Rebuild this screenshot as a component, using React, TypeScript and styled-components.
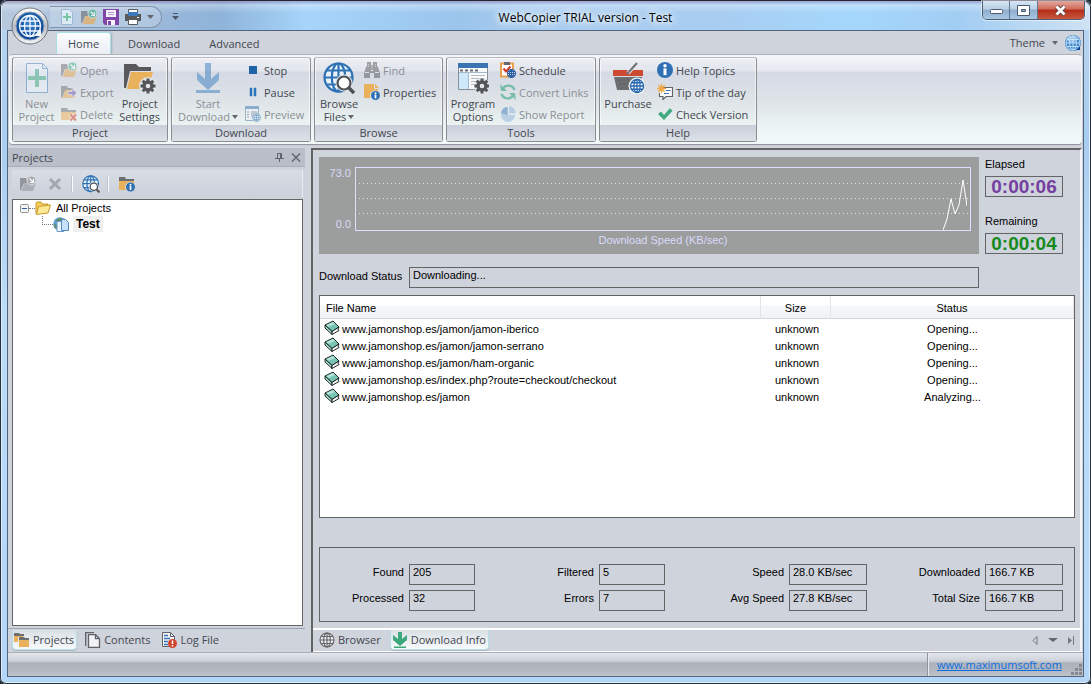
import React from "react";
import styled, { createGlobalStyle } from "styled-components";

const ui = `"Open Sans", "Noto Sans", sans-serif`;
const sys = `"Liberation Sans", Arial, sans-serif`;
const c = {
  face: "#cfd3dc",
  line: "#646464",
  ink: "#43474f",
  dim: "#8b8e95",
  blue: "#2f72b4",
  orange: "#eab15c",
  gray: "#58595b",
  green: "#3fa77c",
};

const Global = createGlobalStyle`
  * { box-sizing: border-box; }
  body { margin: 0; background: #1c2430; overflow: hidden; }
  button { font: inherit; color: inherit; background: none; border: 0; padding: 0; }
  svg { display: block; flex: none; }
`;

/* ---------- window frame ---------- */
const Window = styled.div`
  display: flex;
  flex-direction: column;
  height: 100vh;
  min-height: 560px;
  padding: 0 7px 7px;
  border-radius: 7px 7px 6px 6px;
  background: linear-gradient(180deg, #b9d5ee 0, #a9cdf0 20%, #bcdcf7 45%, #b3d6f8 100%);
  box-shadow: inset 0 0 0 1px #27313f, inset 0 0 0 2px #dcecfa;
  font: 11px/13px ${ui};
  color: ${c.ink};
`;
const TitleBar = styled.header`
  position: relative;
  display: flex;
  flex: none;
  height: 30px;
  margin: 0 -5px;
  background: linear-gradient(180deg, rgba(140, 110, 160, 0.35) 1px, rgba(255, 255, 255, 0.3) 4px, rgba(255, 255, 255, 0) 12px),
    linear-gradient(90deg, #b6c9dd 0, #a3bdda 10%, #8fb3d9 20%, #a6d4fa 28%, #9cc5ec 42%, #a9cdf0 50%, #a8cdf1 66%, #a5d7fc 78%, #a2cdf3 88%, #cfe2f3 100%);
  border-radius: 6px 6px 0 0;
  border-top: 1px solid #2b2334;
`;
const Title = styled.h1`
  flex: 1;
  margin: 0;
  padding: 0 0 0 187px;
  text-align: center;
  font: 12px/33px ${ui};
  color: #000;
  text-shadow: 0 0 6px #fff, 0 0 9px #fff, 0 0 12px #fff;
`;
const QuickBar = styled.div`
  position: absolute;
  left: 48px;
  top: 5px;
  display: flex;
  align-items: center;
  gap: 6px;
  height: 22px;
  width: 112px;
  padding-left: 9px;
  border: 1px solid #8195ae;
  border-left: 0;
  border-radius: 0 12px 12px 0;
  background: rgba(255, 255, 255, 0.2);
`;
const More = styled.button`
  position: absolute;
  left: 170px;
  top: 12px;
`;
const Orb = styled.button`
  position: absolute;
  left: 9px;
  top: 6px;
  width: 38px;
  height: 38px;
  z-index: 2;
`;
const WinButtons = styled.div`
  display: flex;
  width: 103px;
  height: 19px;
  margin-right: 4px;
  border: 1px solid #4d6078;
  border-top: 0;
  border-radius: 0 0 5px 5px;
  overflow: hidden;
  box-shadow: 0 0 0 1px rgba(255, 255, 255, 0.5);
`;
const WinButton = styled.button<{ $close?: boolean }>`
  flex: ${(p) => (p.$close ? 47 : 27)};
  display: flex;
  align-items: center;
  justify-content: center;
  border-right: ${(p) => (p.$close ? 0 : "1px solid #62778f")};
  background: ${(p) =>
    p.$close
      ? "linear-gradient(#e2a99f 0, #d06a58 45%, #b22c18 50%, #c9573f 100%)"
      : "linear-gradient(#d7e6f5 0, #b9cfe6 45%, #8fadcc 50%, #a9c6e2 100%)"};
`;
const Client = styled.div`
  display: flex;
  flex-direction: column;
  flex: 1;
  min-height: 0;
  border: 1px solid #53657c;
  background: ${c.face};
`;

/* ---------- ribbon ---------- */
const TabRow = styled.nav`
  display: flex;
  flex: none;
  align-items: flex-end;
  height: 23px;
  padding: 0 2px 0 48px;
`;
const Tab = styled.button<{ $on?: boolean }>`
  height: 22px;
  padding: 0 11px;
  margin-right: 5px;
  border: 1px solid transparent;
  border-bottom: 0;
  border-radius: 3px 3px 0 0;
  ${(p) => p.$on && "border-color: #a9dfe4; background: linear-gradient(#fdfdfe, #e9edf4); box-shadow: 1px 0 2px #9fb0bd;"}
`;
const Theme = styled.button`
  display: flex;
  align-items: center;
  gap: 7px;
  height: 23px;
  margin-left: auto;
`;
const Ribbon = styled.section`
  display: flex;
  flex: none;
  gap: 3px;
  height: 90px;
  margin: 0 1px;
  padding: 2px 2px 1px;
  border: 1px solid #f4f6f9;
  border-top-color: #b0b1b6;
  border-radius: 4px;
  background: linear-gradient(#f5f6fa 0, #e6e9f0 16px, #d5dae6 17px, #e0e5e9 50px, #effaf8 80px, #effaf8 100%);
  box-shadow: 0 1px 1px #8c8f97;
`;
const GroupBox = styled.div<{ $w: number }>`
  display: flex;
  flex-direction: column;
  flex: none;
  width: ${(p) => p.$w}px;
  height: 85px;
  border: 1px solid #8a8c90;
  border-top-color: #b7b9bf;
  border-radius: 3px;
  background: linear-gradient(#eceef3 0, #e1e5ec 13px, #d4d9e4 14px, #dfe4e8 44px, #ebf4f2 68px);
  box-shadow: inset 0 0 0 1px rgba(255, 255, 255, 0.6);
`;
const GroupBody = styled.div`
  display: flex;
  flex: 1;
`;
const GroupName = styled.div`
  height: 16px;
  text-align: center;
  line-height: 16px;
  background: linear-gradient(#c9ced9, #dde1e8);
`;
const Big = styled.button<{ $w: number }>`
  display: flex;
  flex-direction: column;
  align-items: center;
  gap: 3px;
  width: ${(p) => p.$w}px;
  padding-top: 4px;
  line-height: 13px;
  white-space: nowrap;
  &:disabled { color: ${c.dim}; }
  &:disabled > svg { opacity: 0.5; }
`;
const Line = styled.span`
  display: flex;
  align-items: center;
  justify-content: center;
  gap: 2px;
  height: 13px;
`;
const Column = styled.div`
  display: flex;
  flex-direction: column;
  padding-top: 1px;
`;
const Small = styled.button`
  display: flex;
  align-items: center;
  gap: 3px;
  height: 22px;
  padding: 0 1px;
  white-space: nowrap;
  &:disabled { color: ${c.dim}; }
  &:disabled > svg { opacity: 0.5; }
`;

/* ---------- docked panes ---------- */
const Work = styled.main`
  display: flex;
  flex: 1;
  min-height: 0;
  gap: 6px;
  margin-top: 4px;
`;
const Dock = styled.aside`
  display: flex;
  flex-direction: column;
  flex: none;
  width: 297px;
`;
const Caption = styled.div`
  display: flex;
  align-items: center;
  gap: 7px;
  height: 19px;
  padding: 0 4px;
  background: #b9bec9;
  border-bottom: 1px solid #a7adba;
  h2 { flex: 1; margin: 0; font: inherit; }
`;
const Tools = styled.div`
  display: flex;
  align-items: center;
  height: 27px;
  margin: 3px 2px 2px 4px;
  padding-left: 2px;
  border-right: 1px solid #e8edf4;
  background: linear-gradient(#d9dde5, #cbd0da);
`;
const ToolButton = styled.button`
  display: flex;
  justify-content: center;
  width: 27px;
  &:disabled { opacity: 0.9; }
`;
const Divider = styled.span`
  width: 1px;
  height: 16px;
  margin: 0 4px;
  background: #fafbfd;
  box-shadow: -1px 0 0 #c0c4cc;
`;
const TreeBox = styled.div`
  flex: 1;
  margin: 0 2px 2px 4px;
  padding: 0 7px;
  border: 1px solid ${c.line};
  background: #fff;
  font: 11px/16px ${sys};
  color: #000;
`;
const TreeRow = styled.div<{ $depth: number }>`
  display: flex;
  align-items: center;
  height: 16px;
  padding-left: ${(p) => p.$depth * 22}px;
`;
const TreeName = styled.span<{ $selected?: boolean }>`
  padding: 0 3px;
  margin-left: 2px;
  ${(p) => p.$selected && `margin-left: 4px; background: #efefef; font-weight: bold; font-size: 12px;`}
`;
const Dots = styled.span<{ $elbow?: boolean }>`
  width: ${(p) => (p.$elbow ? 11 : 6)}px;
  height: ${(p) => (p.$elbow ? 9 : 1)}px;
  border-bottom: 1px dotted #777;
  border-left: ${(p) => (p.$elbow ? "1px dotted #777" : 0)};
  align-self: ${(p) => (p.$elbow ? "flex-start" : "center")};
`;
const BottomTabs = styled.nav`
  display: flex;
  flex: none;
  align-items: flex-start;
  gap: 6px;
  height: 24px;
  padding: 1px 10px 0 4px;
  border-top: 1px solid #9ea3ad;
`;
const BottomTab = styled.button<{ $on?: boolean }>`
  display: flex;
  align-items: center;
  gap: 3px;
  height: 20px;
  padding: 0 2px 0 1px;
  border: 1px solid transparent;
  border-top: 0;
  border-radius: 0 0 4px 4px;
  ${(p) => p.$on && "border-color: #b4dfe6; background: linear-gradient(#d9dfe5, #f8fafb); box-shadow: 0 1px 1px #aeb5bf;"}
`;
const TabNav = styled.span`
  display: flex;
  align-items: center;
  gap: 10px;
  height: 20px;
  margin-left: auto;
`;
const View = styled.section`
  display: flex;
  flex-direction: column;
  flex: 1;
  min-width: 0;
  margin-right: 1px;
  border-left: 2px solid ${c.line};
  border-top: 2px solid ${c.line};
  border-right: 2px solid #f4f6f9;
  ${BottomTabs} {
    padding: 0 5px 0 4px;
    border-top: 2px solid #fff;
    border-bottom: 1px solid #fff;
  }
`;
const Page = styled.div`
  display: flex;
  flex-direction: column;
  flex: 1;
  min-height: 0;
  padding: 7px 5px 6px 6px;
  font: 11px/14px ${sys};
  color: #000;
`;
const Meters = styled.div`
  display: flex;
  gap: 6px;
  flex: none;
`;
const Graph = styled.figure`
  display: grid;
  flex: 1;
  grid-template: 64px 1fr / 32px 1fr;
  gap: 0 4px;
  height: 97px;
  margin: 0;
  padding: 10px 8px 0 0;
  background: #9c9e9d;
  color: #d9d9fb;
`;
const Scale = styled.div`
  display: flex;
  flex-direction: column;
  justify-content: space-between;
  text-align: right;
  line-height: 13px;
`;
const Plot = styled.div`
  display: flex;
  justify-content: flex-end;
  padding-right: 3px;
  border: 1px solid #dedeff;
  background: 
    repeating-linear-gradient(90deg, transparent 0 3px, #e4e4e0 3px 4px) 0 15px / 100% 1px no-repeat,
    repeating-linear-gradient(90deg, transparent 0 3px, #e4e4e0 3px 4px) 0 30px / 100% 1px no-repeat,
    repeating-linear-gradient(90deg, transparent 0 3px, #e4e4e0 3px 4px) 0 45px / 100% 1px no-repeat;
`;
const GraphName = styled.figcaption`
  grid-column: 2;
  text-align: center;
  line-height: 19px;
`;
const Timers = styled.div`
  display: flex;
  flex-direction: column;
  justify-content: space-between;
  width: 90px;
`;
const Timer = styled.div`
  display: flex;
  flex-direction: column;
  gap: 5px;
`;
const Clock = styled.output<{ $color: string }>`
  width: 78px;
  height: 21px;
  border: 1px solid ${c.line};
  text-align: center;
  font: bold 19px/20px ${sys};
  color: ${(p) => p.$color};
`;
const StatusRow = styled.div`
  display: flex;
  flex: none;
  margin: 13px 96px 7px 0;
  label { width: 90px; line-height: 19px; }
`;
const Value = styled.output`
  flex: 1;
  height: 21px;
  padding-left: 3px;
  border: 1px solid ${c.line};
  line-height: 15px;
  white-space: nowrap;
`;
const ListBox = styled.div`
  flex: 1;
  min-height: 0;
  overflow: hidden;
  border: 1px solid ${c.line};
  background: #fff;
`;
const Files = styled.table`
  width: 100%;
  table-layout: fixed;
  border-collapse: separate;
  border-spacing: 0;
  th {
    height: 23px;
    padding: 2px 0 0;
    font-weight: normal;
    background: linear-gradient(#fff 0 9px, #f7f8fa 10px, #f1f2f4 100%);
    border-bottom: 1px solid #d5d5d5;
    border-right: 1px solid #e2e5e9;
  }
  th:first-child { padding-left: 6px; text-align: left; }
  td { height: 17px; padding: 0; text-align: center; }
  td:nth-child(2) { padding-left: 2px; }
  tbody::before { content: ""; display: block; height: 1px; }
`;
const FileName = styled.div`
  display: flex;
  align-items: center;
  gap: 2px;
  height: 17px;
  padding-left: 4px;
  svg { align-self: flex-start; }
`;
const Stats = styled.div`
  display: grid;
  flex: none;
  grid-template-columns: 89px 66px 124fr 66px 124fr 78px 118fr 78px;
  row-gap: 5px;
  margin-top: 29px;
  padding: 16px 11px 10px 0;
  border: 1px solid ${c.line};
  label { padding-right: 5px; text-align: right; line-height: 17px; white-space: nowrap; }
`;
const StatusBar = styled.footer`
  display: flex;
  flex: none;
  justify-content: flex-end;
  height: 24px;
  border-top: 1px solid #a9adb6;
  background: linear-gradient(#e3e6eb 0, #cdd1d9 8px, #adb2bb 10px, #b3b7c0 17px, #c0c3ca 100%);
`;
const LinkCell = styled.div`
  display: flex;
  width: 156px;
  padding-left: 9px;
  border-left: 1px solid #8f949d;
  box-shadow: inset 1px 0 0 #e8eaee;
  a { flex: 1; color: #0a6fe0; line-height: 24px; }
  svg { align-self: flex-end; }
`;

/* ---------- icons ---------- */
const Arrow = ({ w = 7 }: { w?: number }) => (
  <svg width={w} height="4" viewBox="0 0 8 4" preserveAspectRatio="none"><path d="M0 0h8L4 4z" fill="#66686c" /></svg>
);
const Pic = ({ s = 16, children }: { s?: number; children: React.ReactNode }) => (
  <svg width={s} height={s} viewBox={`0 0 ${s} ${s}`}>{children}</svg>
);
const Net = ({ x, y, r, color = c.blue, fill = "#fff", w = 1.3 }: { x: number; y: number; r: number; color?: string; fill?: string; w?: number }) => (
  <g fill="none" stroke={color} strokeWidth={w}>
    <circle cx={x} cy={y} r={r} fill={fill} />
    <ellipse cx={x} cy={y} rx={r * 0.48} ry={r} />
    <path d={`M${x} ${y - r}v${2 * r}M${x - r} ${y}h${2 * r}M${x - r * 0.86} ${y - r * 0.5}h${r * 1.72}M${x - r * 0.86} ${y + r * 0.5}h${r * 1.72}`} />
  </g>
);
const Gear = ({ x, y }: { x: number; y: number }) => (
  <g transform={`translate(${x} ${y})`} stroke="#555659" fill="none">
    <circle r="4" strokeWidth="3.4" />
    <path d="M0-7.5V-5M0 7.5V5M-7.5 0H-5M7.5 0H5M-5.3-5.3l1.8 1.8M5.3 5.3L3.5 3.5M-5.3 5.3l1.8-1.8M5.3-5.3L3.5-3.5" strokeWidth="3" />
  </g>
);
const Info = ({ x, y, r }: { x: number; y: number; r: number }) => (
  <g>
    <circle cx={x} cy={y} r={r} fill="#2f6fb3" />
    <path d={`M${x} ${y - r * 0.2}v${r * 0.85}`} stroke="#fff" strokeWidth={r * 0.38} fill="none" />
    <circle cx={x} cy={y - r * 0.52} r={r * 0.22} fill="#fff" />
  </g>
);
const NewDoc = () => (
  <Pic s={32}>
    <path d="M5.500 1.500h16l5 5v24h-21z" fill="#eaf3fa" stroke="#4a80bd" />
    <path d="M21.500 1.500v5h5" fill="none" stroke="#4a80bd" />
    <path d="M15 8h4v7h7v4h-7v7h-4v-7H8v-4h7z" fill="#44ae85" transform="translate(-1 -1)" />
  </Pic>
);
const SmallDoc = () => (
  <Pic>
    <path d="M2.500.5h8l3 3v12h-11z" fill="#dceaf5" stroke="#9db9d8" />
    <path d="M7 4h2v3h3v2H9v3H7V9H4V7h3z" fill="#7cc6a4" />
  </Pic>
);
const OpenPic = ({ soft, mono }: { soft?: boolean; mono?: boolean }) => (
  <Pic>
    <g opacity={soft ? 0.65 : 1}>
      <path d="M0 2h6l1 2h4v3H4L1 14H0z" fill={mono ? "#8d9095" : "#707174"} />
      <path d="M4.500 7H16l-3 8H1.500z" fill={mono ? "#a9adb2" : "#e8a850"} />
      <circle cx="11.500" cy="4.500" r="4.500" fill={mono ? "#a3a6aa" : "#3eac84"} stroke="#dfe3ea" />
      <path d="M9.500 2.500l4 4M13.500 3v3.500H10" stroke="#fff" strokeWidth="1.200" fill="none" />
    </g>
  </Pic>
);
const ExportPic = () => (
  <Pic>
    <path d="M0 2h6l1 2h5v3H4L1 14H0z" fill="#707174" />
    <path d="M4.500 6H14v8H1.500z" fill="#e8a850" />
    <path d="M7 7.500h4V4.500L16 9l-5 4.500v-3H7z" fill="#7152b5" stroke="#e6e8ee" strokeWidth=".8" />
  </Pic>
);
const DeletePic = () => (
  <Pic>
    <path d="M0 2h6l1 2h8v2H0z" fill="#707174" />
    <path d="M0 6h15v8H0z" fill="#e8a850" />
    <path d="M9.500 8.500l5.500 6M15 8.500l-5.500 6" stroke="#f3f3f3" strokeWidth="4" />
    <path d="M9.500 8.500l5.500 6M15 8.500l-5.500 6" stroke="#d0351f" strokeWidth="2.200" />
  </Pic>
);
const SettingsPic = () => (
  <Pic s={32}>
    <path d="M0 2h12l3 3h12v4H6L2 26H0z" fill="#59595b" />
    <path d="M7 10h22l-5 17H3z" fill={c.orange} />
    <circle cx="24" cy="24" r="9" fill="#dfe5e8" />
    <Gear x={24} y={24} />
  </Pic>
);
const DownPic = () => (
  <Pic s={32}>
    <path d="M13 1h6v16l8-7v8L16 28 5 18v-8l8 7zM4 28h24v3H4z" fill="#3b7fc0" />
  </Pic>
);
const PreviewPic = () => (
  <Pic>
    <path d="M.5.500h13v14H.5z" fill="#edf3fa" stroke="#53779e" />
    <path d="M0 0h14v3H0z" fill="#3973b3" />
    <path d="M2 6h2M2 8.500h2M2 11h2M6 6h6M6 8h4M6 10h2" stroke="#55606c" />
    <Net x={11.500} y={11.500} r={4} w={0.9} />
  </Pic>
);
const BrowsePic = ({ s = 32 }: { s?: number }) => (
  <svg width={s} height={s} viewBox="0 0 32 32">
    <Net x={15.500} y={15.500} r={14} fill="#e9f2fb" w={2.200} />
    <circle cx="21" cy="21" r="8.500" fill="#e6edf2" />
    <path d="M25 25l6 6" stroke="#505154" strokeWidth="3.500" />
    <circle cx="21" cy="21" r="6.500" fill="#fff" stroke="#505154" strokeWidth="2.200" />
  </svg>
);
const FindPic = () => (
  <Pic>
    <path d="M3 0h4v3h2V0h4v4l1 1 2 6v5H10v-5H6v5H0v-5l2-6 1-1z" fill="#55565a" />
    <path d="M7.500 4h1M7.500 6h1M7 8.500h2" stroke="#eee" />
    <path d="M1 10.500h4M11 10.500h4" stroke="#e4e4e4" />
    <path d="M4.500 2v3M11.500 2v3" stroke="#999" />
  </Pic>
);
const PropsPic = () => (
  <Pic>
    <path d="M0 0h10v5h4v9H0z" fill={c.orange} />
    <path d="M11 0l4 4h-4z" fill={c.orange} />
    <circle cx="11" cy="11.500" r="5" fill="#e4eaee" />
    <Info x={11.500} y={11.500} r={4.500} />
  </Pic>
);
const OptionsPic = () => (
  <Pic s={32}>
    <path d="M1.500 1.500h29v26h-29z" fill="#f7f9fb" stroke="#8a8d92" />
    <path d="M1 1h30v5H1z" fill="#3973b3" />
    <path d="M3 8.500h18" stroke="#6b6d70" strokeWidth="2" strokeDasharray="3 2" />
    <path d="M2 11h9v16H2z" fill="#cde8fa" />
    <path d="M11.500 11v16M2 10.500h28" stroke="#a8b8c8" />
    <path d="M14 13.500h14M14 16.500h14M14 19.500h8M14 22.500h5" stroke="#b7babd" />
    <circle cx="25" cy="24" r="8" fill="#e3e8ea" />
    <Gear x={25} y={24} />
  </Pic>
);
const SchedulePic = () => (
  <Pic>
    <path d="M1 1.500h12v13H1z" fill="#fff" stroke="#e7a14b" strokeWidth="2" />
    <path d="M4 0h6v3H4z" fill="#67686b" />
    <path d="M3.500 6.500l2.500 3 4.500-5" fill="none" stroke="#cf3a26" strokeWidth="2" />
    <Net x={11.500} y={11.500} r={4} w={1.100} color="#2459a0" />
  </Pic>
);
const ConvertPic = () => (
  <Pic>
    <g fill="none" stroke="#169b6d" strokeWidth="2.300">
      <path d="M14.500 6A6.500 6.500 0 0 0 3 4.500M1.500 10A6.500 6.500 0 0 0 13 11.500" />
    </g>
    <path d="M0 0l1 7h6zM16 16l-1-7H9z" fill="#169b6d" />
  </Pic>
);
const ReportPic = () => (
  <Pic>
    <path d="M7 2v7h7A7 7 0 1 1 7 2z" transform="translate(1 0)" fill="#8fb3dc" />
    <path d="M9 0a7 7 0 0 1 6.500 7.500H9z" fill="#8fb3dc" />
    <path d="M7.500 1A7 7 0 0 0 1 7l6.500 2z" fill="#3a79bd" />
  </Pic>
);
const BasketPic = () => (
  <Pic s={32}>
    <path d="M2 15h28l-4 13H5z" fill="#6c6d70" />
    <path d="M7 18h2M11 18h2M15 18h2M7 22h2M11 22h2M15 22h2" stroke="#58595c" strokeWidth="1" />
    <path d="M1 8h30v6H1z" fill="#cc4a32" />
    <path d="M16 11L25 1" stroke="#f0f2f4" strokeWidth="4" />
    <path d="M15 12L25 1" stroke="#747578" strokeWidth="2.400" />
    <circle cx="25" cy="24" r="8.500" fill="#f1f5f5" />
    <Net x={25} y={24} r={6.500} color="#2667ad" w={1.300} />
  </Pic>
);
const TipPic = () => (
  <Pic>
    <path d="M4 3.500h11.500v9H9l-3 3v-3H2.500V9" fill="#fff" stroke="#606266" strokeWidth="1.200" />
    <path d="M9 6.500h4.500M7 9.500h5" stroke="#3a6eb5" strokeWidth="1.200" />
    <path d="M4.500 0v9M0 4.500h9M1.300 1.300l6.400 6.400M7.700 1.300L1.300 7.700" stroke="#efaa45" strokeWidth="1.400" />
  </Pic>
);
const CheckPic = () => (
  <Pic><path d="M1 8l3-2.500 3 3.500 6-7L15.500 5 7 14z" fill="#43aa80" /></Pic>
);
const InfoFolder = () => (
  <Pic>
    <path d="M0 1h6l1 2h8v2H0z" fill="#6d6e71" />
    <path d="M0 5h15v9H0z" fill={c.orange} />
    <circle cx="11" cy="11" r="5" fill="#d5dae0" />
    <Info x={11.500} y={11} r={4.500} />
  </Pic>
);
const Folders = () => (
  <Pic>
    <path d="M0 1h5l1 1h4v2H0zM5 5h5l1 1h4v2H5z" fill="#6d6e71" />
    <path d="M0 4h9v1H4v5H0zM5 8h10v7H5z" fill={c.orange} />
  </Pic>
);
const PagesPic = () => (
  <Pic>
    <path d="M.7 14V.7H9" fill="none" stroke="#606266" strokeWidth="1.300" />
    <path d="M3.500 2.700h7l4 4v8.600h-11z" fill="#f0f2f5" stroke="#606266" strokeWidth="1.300" />
    <path d="M10.500 2.700v4h4" fill="none" stroke="#606266" strokeWidth="1.300" />
  </Pic>
);
const LogPic = () => (
  <Pic>
    <path d="M1.500.5h8l4 4v10h-12z" fill="#f0f3f7" stroke="#606266" />
    <path d="M9.500.5v4h4" fill="none" stroke="#606266" />
    <path d="M3 3.500h4M3 6.500h6M3 9.500h4M3 12.500h4" stroke="#3a74b8" strokeWidth="1.400" />
    <circle cx="11.500" cy="11.500" r="4.500" fill="#d0432f" />
    <path d="M11.500 8.500v3.500M11.500 13v1.500" stroke="#fff" strokeWidth="1.500" />
  </Pic>
);
const GreenDown = () => (
  <Pic><path d="M6 0h4v7l5-4v5l-7 6-7-6V3l5 4zM2 14.500h12V16H2z" fill={c.green} /></Pic>
);
const BookPic = () => (
  <Pic>
    <path d="M1 5l8-4 6 6-7 4.500z" fill="#77c3b4" stroke="#0c1514" strokeWidth=".9" />
    <path d="M2.500 5L9 2l2 2-7 3z" fill="#b5e2d8" />
    <path d="M1 5v3l7 6.500v-3z" fill="#a9dcd0" stroke="#0c1514" strokeWidth=".9" />
    <path d="M8 11.500v3l7-4L14 9l1-2z" fill="#f4f4f4" stroke="#0c1514" strokeWidth=".9" />
  </Pic>
);
const YellowFolder = () => (
  <Pic>
    <path d="M1 14V3l1-1h4l1 2h6v3" fill="#f6cf57" stroke="#c2962c" />
    <path d="M3.500 6.500L15.500 5l-2.500 8-11.500 1.500z" fill="#fde895" stroke="#c99a2c" />
  </Pic>
);
const TestPic = () => (
  <Pic>
    <circle cx="7" cy="8" r="6.800" fill="#5f9ed0" />
    <path d="M3 4l4-2 3 1-2 3-4 1zM1 8l3 1 1 4-3-1z" fill="#5c8c61" />
    <path d="M4 5.500h5l2 2v8H4z" fill="#eaf4ff" stroke="#6d9ed0" />
    <path d="M8.500 3.500h4l3 3v8h-7z" fill="#c9e1fa" stroke="#5688c0" />
  </Pic>
);
const Save = () => (
  <Pic>
    <path d="M0 0h16v16H2l-2-2z" fill="#8144a8" />
    <path d="M3 1h10v7H3zM4 11h8v5H4z" fill="#f7f2fb" />
    <path d="M5 3.500h6M5 5.500h6" stroke="#b998cf" />
    <path d="M5 12h3v4H5z" fill="#8144a8" />
  </Pic>
);
const Printer = () => (
  <Pic>
    <path d="M3.500.5h9v5h-9z" fill="#fff" stroke="#58595b" />
    <path d="M0 5h16v7H0z" fill="#58595b" />
    <path d="M3 3h10v4H3z" fill="#3c78ba" />
    <path d="M3.500 10.500h9v5h-9z" fill="#fff" stroke="#58595b" />
    <path d="M12 8.500h2" stroke="#fff" />
  </Pic>
);
const OrbPic = () => (
  <svg width="38" height="38" viewBox="0 0 38 38">
    <defs>
      <linearGradient id="rim" x2="0" y2="1"><stop stopColor="#fff" /><stop offset=".5" stopColor="#b9bcc2" /><stop offset="1" stopColor="#f4f5f6" /></linearGradient>
      <radialGradient id="ball" cy=".4"><stop stopColor="#3a88cf" /><stop offset="1" stopColor="#0d4796" /></radialGradient>
    </defs>
    <circle cx="19" cy="19" r="18" fill="url(#rim)" stroke="#70747c" />
    <circle cx="19" cy="19" r="14" fill="url(#ball)" stroke="#88a1bf" />
    <g fill="none" stroke="#f1f7ff" strokeWidth="1.300">
      <circle cx="19" cy="19" r="10.500" />
      <ellipse cx="19" cy="19" rx="5.500" ry="10.500" />
      <path d="M19 8.500v21M8.500 19h21M10 14h18M10 24h18" />
    </g>
    <path d="M25 27l5-5v7h-6z" fill="#f1f7ff" />
  </svg>
);
const MiniGlobe = () => (
  <Pic>
    <circle cx="8" cy="8" r="8" fill="#3f86cc" />
    <Net x={8} y={8} r={7} color="#b9dbf5" fill="#4088cc" w={1} />
    <ellipse cx="7" cy="4.500" rx="5" ry="3.500" fill="#d5ecfb" opacity=".5" />
    <path d="M11 15l4-4v4z" fill="#0d479b" />
  </Pic>
);

const Group = ({ name, w, children }: { name: string; w: number; children: React.ReactNode }) => (
  <GroupBox $w={w}>
    <GroupBody>{children}</GroupBody>
    <GroupName>{name}</GroupName>
  </GroupBox>
);
const BigButton = ({ w, icon, a, b, arrow, disabled }: { w: number; icon: React.ReactNode; a: string; b?: string; arrow?: boolean; disabled?: boolean }) => (
  <Big $w={w} disabled={disabled}>
    {icon}
    <span>
      <Line>{a}</Line>
      {b && <Line>{b}{arrow && <Arrow w={6} />}</Line>}
    </span>
  </Big>
);

const files: [string, string][] = [
  ["www.jamonshop.es/jamon/jamon-iberico", "Opening..."],
  ["www.jamonshop.es/jamon/jamon-serrano", "Opening..."],
  ["www.jamonshop.es/jamon/ham-organic", "Opening..."],
  ["www.jamonshop.es/index.php?route=checkout/checkout", "Opening..."],
  ["www.jamonshop.es/jamon", "Analyzing..."],
];
const stats: [string, string][] = [
  ["Found", "205"], ["Filtered", "5"], ["Speed", "28.0 KB/sec"], ["Downloaded", "166.7 KB"],
  ["Processed", "32"], ["Errors", "7"], ["Avg Speed", "27.8 KB/sec"], ["Total Size", "166.7 KB"],
];

export default function App() {
  return (
    <>
      <Global />
      <Window>
        <TitleBar>
          <Orb aria-label="Application menu"><OrbPic /></Orb>
          <QuickBar>
            <button aria-label="New"><SmallDoc /></button>
            <button aria-label="Open"><OpenPic soft /></button>
            <button aria-label="Save"><Save /></button>
            <button aria-label="Print"><Printer /></button>
            <button aria-label="Print options"><Arrow /></button>
          </QuickBar>
          <More aria-label="Customize">
            <svg width="7" height="8" viewBox="0 0 7 8"><path d="M1 .5h5" stroke="#4d5866" /><path d="M0 3h7L3.500 7z" fill="#4d5866" /></svg>
          </More>
          <Title>WebCopier TRIAL version - Test</Title>
          <WinButtons>
            <WinButton aria-label="Minimize"><svg width="13" height="7"><rect x=".5" y="2.500" width="12" height="4" rx="1" fill="#fff" stroke="#4b5a6c" /></svg></WinButton>
            <WinButton aria-label="Maximize"><svg width="13" height="11"><path d="M.5.500h12v10H.5zM4.500 4.500h4v2h-4z" fill="#fff" fillRule="evenodd" stroke="#4b5a6c" /></svg></WinButton>
            <WinButton aria-label="Close" $close><svg width="13" height="11"><path d="M2.500 1.500l8 8M10.500 1.500l-8 8" stroke="#5c3a3c" strokeWidth="4.500" /><path d="M2.500 1.500l8 8M10.500 1.500l-8 8" stroke="#fff" strokeWidth="2.800" /></svg></WinButton>
          </WinButtons>
        </TitleBar>
        <Client>
          <TabRow>
            <Tab $on>Home</Tab>
            <Tab>Download</Tab>
            <Tab>Advanced</Tab>
            <Theme>Theme <Arrow w={6} /> <MiniGlobe /></Theme>
          </TabRow>
          <Ribbon>
            <Group name="Project" w={156}>
              <BigButton w={47} icon={<NewDoc />} a="New" b="Project" disabled />
              <Column>
                <Small disabled><OpenPic />Open</Small>
                <Small disabled><ExportPic />Export</Small>
                <Small disabled><DeletePic />Delete</Small>
              </Column>
              <BigButton w={50} icon={<SettingsPic />} a="Project" b="Settings" />
            </Group>
            <Group name="Download" w={140}>
              <BigButton w={72} icon={<DownPic />} a="Start" b="Download" arrow disabled />
              <Column>
                <Small><Pic><path d="M4 4h8v8H4z" fill="#1f64ab" /></Pic>Stop</Small>
                <Small><Pic><path d="M5 4h2v8H5zM9 4h2v8H9z" fill="#2b75bd" stroke="#2b75bd" strokeWidth=".5" /></Pic>Pause</Small>
                <Small disabled><PreviewPic />Preview</Small>
              </Column>
            </Group>
            <Group name="Browse" w={129}>
              <BigButton w={48} icon={<BrowsePic />} a="Browse" b="Files" arrow />
              <Column>
                <Small disabled><FindPic />Find</Small>
                <Small><PropsPic />Properties</Small>
              </Column>
            </Group>
            <Group name="Tools" w={150}>
              <BigButton w={52} icon={<OptionsPic />} a="Program" b="Options" />
              <Column>
                <Small><SchedulePic />Schedule</Small>
                <Small disabled><ConvertPic />Convert Links</Small>
                <Small disabled><ReportPic />Show Report</Small>
              </Column>
            </Group>
            <Group name="Help" w={158}>
              <BigButton w={56} icon={<BasketPic />} a="Purchase" />
              <Column>
                <Small><Pic><Info x={8} y={8} r={8} /></Pic>Help Topics</Small>
                <Small><TipPic />Tip of the day</Small>
                <Small><CheckPic />Check Version</Small>
              </Column>
            </Group>
          </Ribbon>
          <Work>
            <Dock>
              <Caption>
                <h2>Projects</h2>
                <button aria-label="Pin"><svg width="9" height="9" fill="none" stroke="#5e636d"><path d="M2.500 5V.5h4V5M5.500 0v5M0 5.500h9M4.500 6v3" /></svg></button>
                <button aria-label="Close pane"><svg width="10" height="9" stroke="#5e636d" strokeWidth="1.300"><path d="M1 .5l8 8M9 .5l-8 8" /></svg></button>
              </Caption>
              <Tools>
                <ToolButton aria-label="Open project" disabled><OpenPic mono /></ToolButton>
                <ToolButton aria-label="Delete project" disabled><Pic><path d="M3 3l10 10M13 3L3 13" stroke="#a0a3a8" strokeWidth="3" /></Pic></ToolButton>
                <Divider />
                <ToolButton aria-label="Browse files"><BrowsePic s={18} /></ToolButton>
                <Divider />
                <ToolButton aria-label="Project properties"><InfoFolder /></ToolButton>
              </Tools>
              <TreeBox>
                <TreeRow $depth={0}>
                  <svg width="9" height="9"><rect x=".5" y=".5" width="8" height="8" rx="1" fill="#f4f4f4" stroke="#919191" /><path d="M2 4.500h5" stroke="#3458a8" /></svg>
                  <Dots /><YellowFolder /><TreeName>All Projects</TreeName>
                </TreeRow>
                <TreeRow $depth={1}>
                  <Dots $elbow /><TestPic /><TreeName $selected>Test</TreeName>
                </TreeRow>
              </TreeBox>
              <BottomTabs>
                <BottomTab $on><Folders />Projects</BottomTab>
                <BottomTab><PagesPic />Contents</BottomTab>
                <BottomTab><LogPic />Log File</BottomTab>
              </BottomTabs>
            </Dock>
            <View>
              <Page>
                <Meters>
                  <Graph>
                    <Scale><span>73.0</span><span>0.0</span></Scale>
                    <Plot>
                      <svg width="24" height="62" viewBox="0 0 24 62"><path d="M0 62l4-11 4-20 4 15 4-9 4-25 4 26" fill="none" stroke="#fff" /></svg>
                    </Plot>
                    <GraphName>Download Speed (KB/sec)</GraphName>
                  </Graph>
                  <Timers>
                    <Timer><label htmlFor="elapsed">Elapsed</label><Clock id="elapsed" $color="#7440a0">0:00:06</Clock></Timer>
                    <Timer><label htmlFor="remaining">Remaining</label><Clock id="remaining" $color="#168a1c">0:00:04</Clock></Timer>
                  </Timers>
                </Meters>
                <StatusRow>
                  <label htmlFor="state">Download Status</label>
                  <Value id="state">Downloading...</Value>
                </StatusRow>
                <ListBox>
                  <Files>
                    <colgroup><col /><col width="70" /><col width="243" /></colgroup>
                    <thead><tr><th>File Name</th><th>Size</th><th>Status</th></tr></thead>
                    <tbody>
                      {files.map(([name, state]) => (
                        <tr key={name}>
                          <td><FileName><BookPic />{name}</FileName></td>
                          <td>unknown</td>
                          <td>{state}</td>
                        </tr>
                      ))}
                    </tbody>
                  </Files>
                </ListBox>
                <Stats>
                  {stats.map(([name, value]) => (
                    <React.Fragment key={name}>
                      <label htmlFor={name}>{name}</label>
                      <Value id={name}>{value}</Value>
                    </React.Fragment>
                  ))}
                </Stats>
              </Page>
              <BottomTabs>
                <BottomTab><Pic><Net x={8} y={8} r={7} color="#606266" fill="#eceef2" w={1.100} /></Pic>Browser</BottomTab>
                <BottomTab $on><GreenDown />Download Info</BottomTab>
                <TabNav>
                  <svg width="6" height="9"><path d="M5 .5v8L1 4.500z" fill="none" stroke="#77797e" /></svg>
                  <Arrow w={10} />
                  <svg width="7" height="9"><path d="M0 1v7l4-3.500z" fill="#77797e" /><path d="M5.500 0v9" stroke="#77797e" /></svg>
                </TabNav>
              </BottomTabs>
            </View>
          </Work>
          <StatusBar>
            <LinkCell>
              <a href="#site">www.maximumsoft.com</a>
              <svg width="12" height="12" fill="#858991"><path d="M8 0h3v3H8zM4 4h3v3H4zM8 4h3v3H8zM0 8h3v3H0zM4 8h3v3H4zM8 8h3v3H8z" /></svg>
            </LinkCell>
          </StatusBar>
        </Client>
      </Window>
    </>
  );
}
